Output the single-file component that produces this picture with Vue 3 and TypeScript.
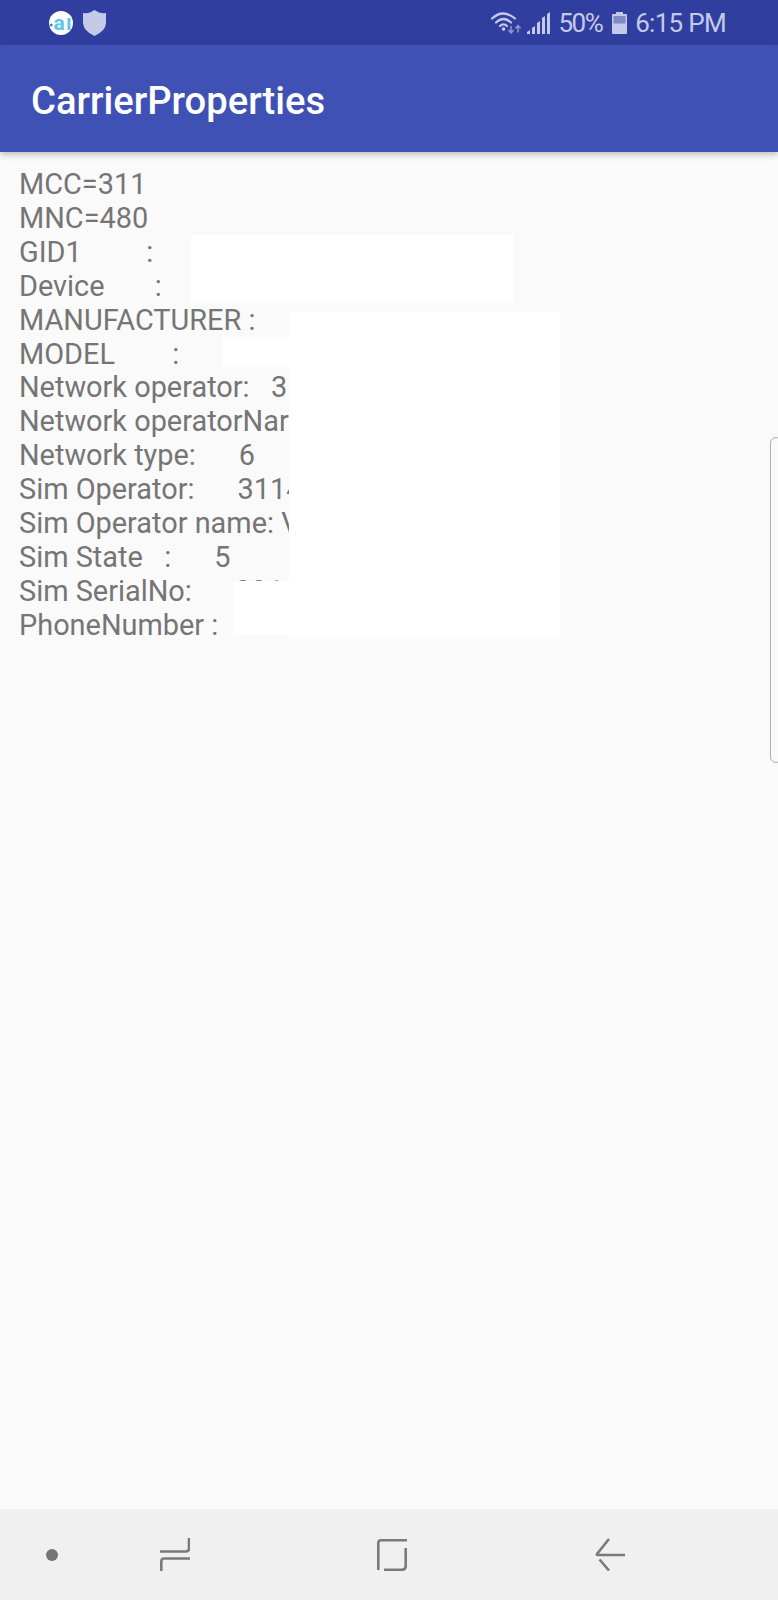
<script setup lang="ts">
const lines: string[] = [
  'MCC=311',
  'MNC=480',
  'GID1         :',
  'Device       :',
  'MANUFACTURER :',
  'MODEL        :',
  'Network operator:   3',
  'Network operatorNar',
  'Network type:      6',
  'Sim Operator:      3114',
  'Sim Operator name: V',
  'Sim State   :      5',
  'Sim SerialNo:      891',
  'PhoneNumber :',
]

const patches = [
  { cls: 'p1' },
  { cls: 'p2' },
  { cls: 'p3' },
  { cls: 'p4' },
]
</script>

<template>
  <div class="screen">
    <header class="status">
      <div class="status-left">
        <svg class="app-a" width="24" height="24" viewBox="0 0 24 24">
          <circle cx="12" cy="12" r="12" fill="#ffffff" />
          <text x="4.5" y="19" class="app-letter">a</text>
          <path d="M20 7v12" stroke="#5cc6e6" stroke-width="3" />
          <circle cx="2.2" cy="14" r="1.5" fill="#2a8fd0" />
        </svg>
        <svg class="shield" width="23" height="26" viewBox="0 0 23 26">
          <path d="M11.5 0 L16 2.6 Q19.5 3.6 23 3 V13 Q22.5 21 11.5 26 Q0.5 21 0 13 V3 Q3.5 3.6 7 2.6 Z" fill="#c5cae9" />
        </svg>
      </div>
      <div class="status-right">
        <svg class="wifi" width="31" height="23" viewBox="0 0 31 23" fill="none" stroke="#c5cae9" stroke-linecap="round">
          <path d="M1 7.5 Q12 -2.5 24 7.5" stroke-width="2.2" />
          <path d="M5 11.5 Q12.5 4.5 20 11.5" stroke-width="2.2" />
          <path d="M9 15 Q12.5 11.5 16 15" stroke-width="2.2" />
          <circle cx="12.5" cy="18" r="1.8" fill="#c5cae9" stroke="none" />
          <path d="M20 15.5v6M17.8 19.5l2.2 2.3 2.2-2.3" stroke="#8f98cf" stroke-width="1.5" />
          <path d="M27 21v-6M24.8 17l2.2-2.3 2.2 2.3" stroke="#8f98cf" stroke-width="1.5" />
        </svg>
        <svg class="signal" width="23" height="22" viewBox="0 0 23 22" fill="#c5cae9">
          <path d="M0 22v-2l3-2v4z" />
          <path d="M5 22v-6l3-2v8z" />
          <path d="M10 22v-11l3-2v13z" />
          <path d="M15 22V6l3-2v18z" />
          <path d="M20 22V2l3-2v22z" />
        </svg>
        <span class="pct">50%</span>
        <svg class="battery" width="15" height="22" viewBox="0 0 15 22">
          <path d="M4 0h7v2h3a1 1 0 0 1 1 1v18a1 1 0 0 1-1 1H1a1 1 0 0 1-1-1V3a1 1 0 0 1 1-1h3z" fill="#c5cae9" />
          <rect x="1.5" y="4" width="12" height="7.5" fill="#7e89c6" />
        </svg>
        <span class="time">6:15 PM</span>
      </div>
    </header>

    <div class="appbar">
      <h1 class="title">CarrierProperties</h1>
    </div>

    <main class="content">
      <div class="info">
        <div v-for="line in lines" :key="line" class="line">{{ line }}</div>
      </div>
      <div v-for="p in patches" :key="p.cls" class="patch" :class="p.cls"></div>
      <div class="edge"></div>
    </main>

    <nav class="nav">
      <span class="dot"></span>
      <svg class="recents" width="30" height="33" viewBox="0 0 30 33" fill="none" stroke="#7a7a7a" stroke-width="2.6">
        <path d="M0 13.5H26Q29 13.5 29 10.5V0" />
        <path d="M30 20.5H4Q1.3 20.5 1.3 23.5V33" />
      </svg>
      <svg class="home" width="30" height="32" viewBox="0 0 30 32" fill="none" stroke="#7a7a7a" stroke-width="2.6">
        <path d="M30 1.3H4Q1.3 1.3 1.3 4V31" />
        <path d="M28.7 9V27Q28.7 30.7 25 30.7H7" />
      </svg>
      <svg class="back" width="30" height="33" viewBox="0 0 30 33" fill="none" stroke="#7a7a7a" stroke-width="2.6">
        <path d="M14 1 L2 16Q1.5 17 3 17H30" />
        <path d="M4.5 21.5 L14 32.5" />
      </svg>
    </nav>
  </div>
</template>

<style>
html, body { margin: 0; background: #fafafa; }
</style>

<style scoped>
.screen {
  width: 778px;
  height: 1600px;
  display: flex;
  flex-direction: column;
  background: #fafafa;
  font-family: Roboto, "Liberation Sans", sans-serif;
  overflow: hidden;
}
.status {
  height: 45px;
  flex: none;
  background: #303f9f;
  display: flex;
  align-items: center;
  justify-content: space-between;
  padding: 0 52px 0 49px;
  color: #c5cae9;
}
.status-left { display: flex; align-items: center; gap: 10px; }
.app-letter {
  font-family: Roboto, "Liberation Sans", sans-serif;
  font-size: 21px;
  font-weight: 700;
  fill: #5cc6e6;
}
.status-right { display: flex; align-items: center; }
.wifi { margin-right: 5px; }
.pct { font-size: 26px; letter-spacing: -1.5px; margin-left: 8px; line-height: 45px; padding-top: 2px; }
.battery { margin-left: 10px; }
.time { font-size: 26px; letter-spacing: -0.7px; margin-left: 8px; line-height: 45px; padding-top: 2px; }
.appbar {
  height: 107px;
  flex: none;
  background: #3f51b5;
  display: flex;
  align-items: center;
  padding: 4px 0 0 31px;
  box-sizing: border-box;
  box-shadow: 0 3px 6px rgba(0, 0, 0, 0.22);
  position: relative;
  z-index: 1;
}
.title {
  margin: 0;
  font-size: 38.2px;
  font-weight: 500;
  color: #fff;
}
.content {
  flex: 1;
  position: relative;
  padding: 16px 0 0 19px;
}
.line {
  font-size: 28.9px;
  line-height: 33.9px;
  color: #757575;
  white-space: pre;
}
.patch { position: absolute; background: #fff; }
.p1 { left: 191px; top: 83px; width: 323px; height: 68px; }
.p2 { left: 289px; top: 160px; width: 271px; height: 327px; }
.p3 { left: 222px; top: 185px; width: 67px; height: 30px; }
.p4 { left: 233px; top: 429px; width: 56px; height: 54px; }
.edge {
  position: absolute;
  left: 770px;
  top: 285px;
  width: 12px;
  height: 326px;
  box-sizing: border-box;
  border: 1.5px solid #b0b0b0;
  border-radius: 9px;
  background: #fafafa;
}
.nav {
  height: 91px;
  flex: none;
  background: #f0f0f0;
  display: flex;
  align-items: center;
  padding-left: 46px;
}
.dot {
  width: 12px;
  height: 12px;
  border-radius: 50%;
  background: #757575;
}
.recents { margin-left: 102px; }
.home { margin-left: 187px; }
.back { margin-left: 188px; }
</style>
